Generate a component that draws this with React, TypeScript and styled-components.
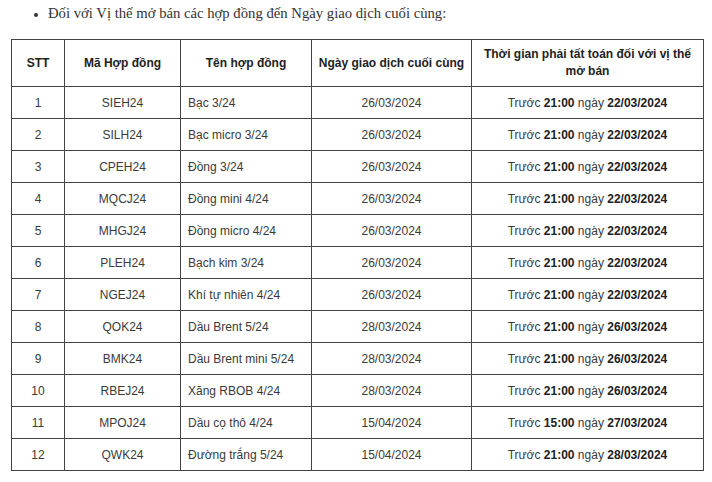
import React from "react";
import styled, { createGlobalStyle } from "styled-components";

const GlobalStyle = createGlobalStyle`
  body {
    margin: 0;
    background: #ffffff;
  }
`;

type Row = {
  stt: number;
  code: string;
  name: string;
  lastDay: string;
  hour: string;
  day: string;
};

const rows: Row[] = [
  { stt: 1, code: "SIEH24", name: "Bạc 3/24", lastDay: "26/03/2024", hour: "21:00", day: "22/03/2024" },
  { stt: 2, code: "SILH24", name: "Bạc micro 3/24", lastDay: "26/03/2024", hour: "21:00", day: "22/03/2024" },
  { stt: 3, code: "CPEH24", name: "Đồng 3/24", lastDay: "26/03/2024", hour: "21:00", day: "22/03/2024" },
  { stt: 4, code: "MQCJ24", name: "Đồng mini 4/24", lastDay: "26/03/2024", hour: "21:00", day: "22/03/2024" },
  { stt: 5, code: "MHGJ24", name: "Đồng micro 4/24", lastDay: "26/03/2024", hour: "21:00", day: "22/03/2024" },
  { stt: 6, code: "PLEH24", name: "Bạch kim 3/24", lastDay: "26/03/2024", hour: "21:00", day: "22/03/2024" },
  { stt: 7, code: "NGEJ24", name: "Khí tự nhiên 4/24", lastDay: "26/03/2024", hour: "21:00", day: "22/03/2024" },
  { stt: 8, code: "QOK24", name: "Dầu Brent 5/24", lastDay: "28/03/2024", hour: "21:00", day: "26/03/2024" },
  { stt: 9, code: "BMK24", name: "Dầu Brent mini 5/24", lastDay: "28/03/2024", hour: "21:00", day: "26/03/2024" },
  { stt: 10, code: "RBEJ24", name: "Xăng RBOB 4/24", lastDay: "28/03/2024", hour: "21:00", day: "26/03/2024" },
  { stt: 11, code: "MPOJ24", name: "Dầu cọ thô 4/24", lastDay: "15/04/2024", hour: "15:00", day: "27/03/2024" },
  { stt: 12, code: "QWK24", name: "Đường trắng 5/24", lastDay: "15/04/2024", hour: "21:00", day: "28/03/2024" },
];

const App = () => {
  return (
    <Page>
      <GlobalStyle />
      <List>
        <li>Đối với Vị thế mở bán các hợp đồng đến Ngày giao dịch cuối cùng:</li>
      </List>
      <Table>
        <colgroup>
          <col style={{ width: 53 }} />
          <col style={{ width: 116 }} />
          <col style={{ width: 131 }} />
          <col style={{ width: 160 }} />
          <col style={{ width: 232 }} />
        </colgroup>
        <thead>
          <tr>
            <Th>STT</Th>
            <Th>Mã Hợp đồng</Th>
            <Th>Tên hợp đồng</Th>
            <Th>Ngày giao dịch cuối cùng</Th>
            <Th>Thời gian phải tất toán đối với vị thế mở bán</Th>
          </tr>
        </thead>
        <tbody>
          {rows.map((r) => (
            <tr key={r.stt}>
              <Td>{r.stt}</Td>
              <Td>{r.code}</Td>
              <Td $left>{r.name}</Td>
              <Td>{r.lastDay}</Td>
              <Td>
                Trước <b>{r.hour}</b> ngày <b>{r.day}</b>
              </Td>
            </tr>
          ))}
        </tbody>
      </Table>
    </Page>
  );
};

export default App;

const Page = styled.div`
  width: 712px;
  height: 482px;
  overflow: hidden;
  padding: 0 0 0 11px;
  box-sizing: border-box;
`;

const List = styled.ul`
  margin: 0;
  padding: 3px 0 0 37px;
  height: 39px;
  box-sizing: border-box;
  font-family: "Liberation Serif", "Times New Roman", serif;
  font-size: 14.7px;
  line-height: 20px;
  color: #333;

  li::marker {
    font-size: 12px;
  }
`;

const Table = styled.table`
  border-collapse: collapse;
  table-layout: fixed;
  width: 692px;
  font-family: "Liberation Sans", Arial, sans-serif;
  font-size: 12px;
  color: #3a3a3a;

  b {
    font-weight: 700;
    color: #222;
  }
`;

const Th = styled.th`
  height: 46px;
  padding: 0 4px;
  border: 1px solid #444;
  font-weight: 700;
  text-align: center;
  line-height: 17px;
  color: #222;
`;

const Td = styled.td<{ $left?: boolean }>`
  height: 31px;
  padding: 0 0 0 ${(p) => (p.$left ? "7px" : "0")};
  border: 1px solid #444;
  text-align: ${(p) => (p.$left ? "left" : "center")};
  white-space: nowrap;
`;
